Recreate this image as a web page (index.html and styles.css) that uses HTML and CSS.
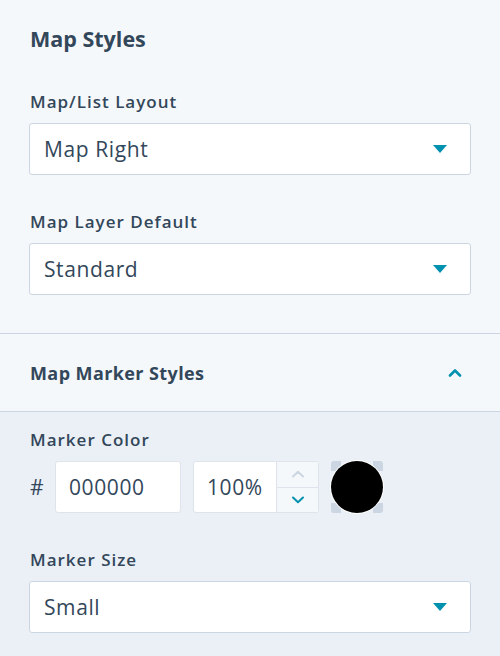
FILE: index.html
```html
<!DOCTYPE html>
<html>
<head>
<meta charset="utf-8">
<link rel="stylesheet" href="styles.css">
</head>
<body>
<section class="panel">
  <h2 class="title">Map Styles</h2>
  <div class="field">
    <div class="label">Map/List Layout</div>
    <div class="select"><span>Map Right</span><span class="caret"></span></div>
  </div>
  <div class="field">
    <div class="label">Map Layer Default</div>
    <div class="select"><span>Standard</span><span class="caret"></span></div>
  </div>
</section>
<div class="accordion-head">
  <span>Map Marker Styles</span>
  <svg class="chev" width="14" height="9" viewBox="0 0 14 9"><path d="M2 7.5 L7 2.5 L12 7.5" fill="none" stroke="#0091ae" stroke-width="2.6" stroke-linecap="round" stroke-linejoin="round"/></svg>
</div>
<section class="panel dark">
  <div class="field first">
    <div class="label">Marker Color</div>
    <div class="color-row">
      <span class="hash">#</span>
      <div class="input hex">000000</div>
      <div class="input opacity">
        <span class="val">100%</span>
        <div class="stepper">
          <div class="step"><svg width="14" height="8" viewBox="0 0 14 8"><path d="M2 6.5 L7 1.8 L12 6.5" fill="none" stroke="#cbd6e2" stroke-width="2" stroke-linecap="round" stroke-linejoin="round"/></svg></div>
          <div class="step"><svg width="14" height="8" viewBox="0 0 14 8"><path d="M2 1.5 L7 6.2 L12 1.5" fill="none" stroke="#0091ae" stroke-width="2" stroke-linecap="round" stroke-linejoin="round"/></svg></div>
        </div>
      </div>
      <div class="swatch"><div class="dot"></div></div>
    </div>
  </div>
  <div class="field">
    <div class="label">Marker Size</div>
    <div class="select"><span>Small</span><span class="caret"></span></div>
  </div>
</section>
</body>
</html>
```
FILE: styles.css
```css
* { box-sizing: border-box; }
html, body { margin: 0; padding: 0; }
body {
  width: 500px;
  height: 656px;
  overflow: hidden;
  background: #eaf0f6;
  font-family: "Open Sans", "Noto Sans", sans-serif;
  color: #33475b;
}
.panel {
  background: #f5f8fa;
  padding: 25px 29px 38px 29px;
}
.panel.dark {
  background: #eaf0f6;
  padding-top: 18px;
}
.title {
  margin: 0 1px;
  font-size: 21.5px;
  line-height: 28px;
  font-weight: 700;
}
.field { margin-top: 37px; }
.title + .field { margin-top: 39px; }
.field.first { margin-top: 0; }
.label {
  margin-left: 1px;
  font-size: 17px;
  line-height: 20px;
  font-weight: 600;
  letter-spacing: 1px;
  margin-bottom: 11px;
}
.select {
  height: 52px;
  background: #fff;
  border: 1px solid #cbd6e2;
  border-radius: 3px;
  display: flex;
  align-items: center;
  justify-content: space-between;
  padding: 0 23px 0 14px;
  font-size: 21px;
  letter-spacing: 0.6px;
}
.caret {
  width: 0; height: 0;
  border-left: 7px solid transparent;
  border-right: 7px solid transparent;
  border-top: 8px solid #0091ae;
}
.accordion-head {
  height: 79px;
  border-top: 1px solid #cbd6e2;
  border-bottom: 1px solid #cbd6e2;
  background: #f5f8fa;
  display: flex;
  align-items: center;
  justify-content: space-between;
  padding: 0 38px 0 30px;
  font-size: 18px;
  letter-spacing: 0.4px;
  font-weight: 700;
}
.color-row {
  display: flex;
  align-items: center;
  gap: 12px;
}
.hash {
  width: 13px;
  margin-left: 1px;
  font-size: 21px;
}
.input {
  height: 52px;
  width: 126px;
  background: #fff;
  border: 1px solid #dfe3eb;
  border-radius: 3px;
  font-size: 21px;
  letter-spacing: 0.6px;
  display: flex;
  align-items: center;
}
.hex { padding-left: 13px; }
.opacity { padding-left: 13px; justify-content: space-between; }
.stepper {
  width: 42px;
  height: 100%;
  border-left: 1px solid #dfe3eb;
  display: flex;
  flex-direction: column;
  background: #f5f8fa;
}
.step {
  flex: 1;
  display: flex;
  align-items: center;
  justify-content: center;
}
.step + .step { border-top: 1px solid #dfe3eb; }
.swatch {
  width: 52px;
  height: 52px;
  background:
    linear-gradient(#cbd6e2, #cbd6e2) left top / 10px 10px no-repeat,
    linear-gradient(#cbd6e2, #cbd6e2) right top / 10px 10px no-repeat,
    linear-gradient(#cbd6e2, #cbd6e2) left bottom / 10px 10px no-repeat,
    linear-gradient(#cbd6e2, #cbd6e2) right bottom / 10px 10px no-repeat;
  border-radius: 3px;
}
.dot {
  width: 52px;
  height: 52px;
  border-radius: 50%;
  background: #000;
  box-shadow: 0 0 0 1px #fff;
}
```
